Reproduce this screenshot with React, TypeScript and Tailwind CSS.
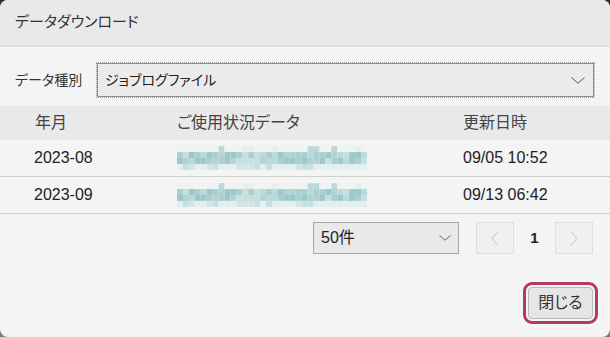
import React from "react";

const palette = ["#e3eeee", "#d2e5e5", "#bcd9d9", "#a9cfcf", "#9cc8c8", "#c6dfdf", "#eef4f4", "#b2d3d3"];

function Mosaic() {
  const cols = 32;
  const rows = 4;
  const cells: React.ReactNode[] = [];
  let seed = 7;
  const rnd = () => {
    seed = (seed * 9301 + 49297) % 233280;
    return seed / 233280;
  };
  for (let r = 0; r < rows; r++) {
    for (let c = 0; c < cols; c++) {
      let idx: number;
      const v = rnd();
      if (r === 0) idx = v < 0.6 ? 6 : v < 0.85 ? 0 : 2;
      else if (r === 3) idx = v < 0.5 ? 0 : v < 0.8 ? 1 : 5;
      else idx = v < 0.25 ? 3 : v < 0.45 ? 4 : v < 0.65 ? 2 : v < 0.85 ? 7 : 5;
      cells.push(
        <rect key={`${r}-${c}`} x={c * 6} y={r * 6} width={6} height={6} fill={palette[idx]} />
      );
    }
  }
  return (
    <svg width="190" height="24" viewBox="0 0 192 24" className="block">
      {cells}
    </svg>
  );
}

function ChevronDown({ w = 13, h = 7, color = "#555" }: { w?: number; h?: number; color?: string }) {
  return (
    <svg width={w} height={h} viewBox={`0 0 ${w} ${h}`}>
      <polyline points={`0.5,0.5 ${w / 2},${h - 0.8} ${w - 0.5},0.5`} fill="none" stroke={color} strokeWidth="1" />
    </svg>
  );
}

export default function App() {
  const rows = [
    { ym: "2023-08", dt: "09/05 10:52" },
    { ym: "2023-09", dt: "09/13 06:42" },
  ];
  return (
    <div className="w-[610px] h-[337px] bg-[linear-gradient(180deg,#2e2e2e_0%,#6f7f80_100%)] font-['Liberation_Sans','Noto_Sans_CJK_JP',sans-serif] [font-feature-settings:'palt'] text-[#333]">
      <div className="w-full h-full rounded-[8px] overflow-hidden bg-[#f4f4f4] flex flex-col">
        <div className="h-[47px] bg-[#e9e9e9] border-b-2 border-[#dedede] flex items-center pl-[15px] text-[15px] text-[#333] shrink-0">
          データダウンロード
        </div>
        <div className="flex items-center mt-[16px] pl-[15px] pr-[16px]">
          <div className="w-[82px] text-[14px] text-[#333]">データ種別</div>
          <div className="flex-1 h-[34px] bg-[#ebebeb] border border-[#8c8c8c] outline outline-1 outline-dotted outline-[#9a9a9a] flex items-center justify-between pl-[7px] pr-[8px]">
            <span className="text-[14px] text-[#222]">ジョブログファイル</span>
            <ChevronDown w={14} h={7} color="#555" />
          </div>
        </div>
        <div className="mt-[9px]">
          <div className="h-[34px] bg-[#e9e9e9] flex items-center text-[16px] text-[#444]">
            <div className="w-[177px] pl-[35px]">年月</div>
            <div className="w-[286px]">ご使用状況データ</div>
            <div>更新日時</div>
          </div>
          {rows.map((r) => (
            <div key={r.ym} className="h-[37px] border-b border-[#cfcfcf] flex items-center text-[16px] text-[#222]">
              <div className="w-[177px] pl-[34px]">{r.ym}</div>
              <div className="w-[286px]">
                <Mosaic />
              </div>
              <div>{r.dt}</div>
            </div>
          ))}
        </div>
        <div className="flex items-center justify-end mt-[8px] pr-[17px]">
          <div className="w-[146px] h-[32px] bg-[#e9e9e9] border border-[#a8a8a8] flex items-center justify-between pl-[7px] pr-[7px]">
            <span className="text-[16px] text-[#222]">50件</span>
            <ChevronDown w={12} h={6} color="#666" />
          </div>
          <div className="ml-[17px] w-[38px] h-[32px] border border-[#dedede] bg-[#f0f0f0] flex items-center justify-center">
            <svg width="8" height="15" viewBox="0 0 8 15">
              <polyline points="7,0.5 1,7.5 7,14.5" fill="none" stroke="#c4c4c4" strokeWidth="1" />
            </svg>
          </div>
          <div className="w-[41px] text-center text-[15px] font-bold text-[#222]">1</div>
          <div className="w-[38px] h-[32px] border border-[#dedede] bg-[#f0f0f0] flex items-center justify-center">
            <svg width="8" height="15" viewBox="0 0 8 15">
              <polyline points="1,0.5 7,7.5 1,14.5" fill="none" stroke="#c4c4c4" strokeWidth="1" />
            </svg>
          </div>
        </div>
        <div className="flex justify-end mt-[33px] pr-[17px]">
          <button className="w-[65px] h-[32px] bg-[#e6e6e6] border border-[#b9b9b9] rounded-[4px] text-[16px] text-[#333] outline-[3px] outline-solid outline-offset-[2px] outline-[#b23a6b] flex items-center justify-center">
            閉じる
          </button>
        </div>
      </div>
    </div>
  );
}
